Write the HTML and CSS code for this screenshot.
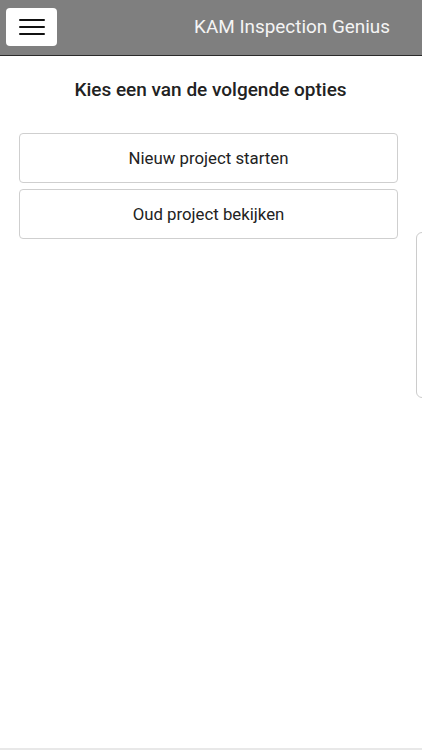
FILE: index.html
```html
<!DOCTYPE html>
<html lang="nl">
<head>
<meta charset="utf-8">
<title>KAM Inspection Genius</title>
<link rel="stylesheet" href="styles.css">
</head>
<body>
<div class="app">
  <header class="topbar">
    <button class="menu-btn" aria-label="Menu">
      <span class="bar"></span><span class="bar"></span><span class="bar"></span>
    </button>
    <div class="title">KAM Inspection Genius</div>
  </header>
  <main class="content">
    <h1 class="heading">Kies een van de volgende opties</h1>
    <div class="options">
      <button class="option">Nieuw project starten</button>
      <button class="option">Oud project bekijken</button>
    </div>
  </main>
  <div class="side-tab"></div>
</div>
</body>
</html>
```

FILE: styles.css
```css
* { box-sizing: border-box; }
html, body {
  margin: 0;
  padding: 0;
  background: #ffffff;
  font-family: Roboto, "Liberation Sans", Arial, sans-serif;
}
.app {
  position: relative;
  width: 422px;
  height: 750px;
  overflow: hidden;
  border-bottom: 2px solid #e8e8e8;
}
.topbar {
  height: 56px;
  background: #7f7f7f;
  border-bottom: 1.5px solid #2a2a2a;
  display: flex;
  align-items: center;
  justify-content: space-between;
  padding: 0 32px 0 6px;
}
.menu-btn {
  width: 51px;
  height: 38px;
  margin-top: -1px;
  background: #ffffff;
  border: none;
  border-radius: 4px;
  display: flex;
  flex-direction: column;
  align-items: center;
  justify-content: center;
  gap: 4.5px;
  padding: 0;
}
.bar {
  display: block;
  width: 26px;
  height: 2.4px;
  background: #111;
  border-radius: 1px;
}
.title {
  color: #f4f4f4;
  font-size: 18.9px;
  margin-top: -3px;
}
.content {
  padding: 0 24px 0 19px;
}
.heading {
  margin: 21px 0 0 0;
  text-align: center;
  font-size: 19px;
  font-weight: 500;
  color: #222;
  line-height: 26px;
  padding-left: 4px;
}
.options {
  margin-top: 30px;
  display: flex;
  flex-direction: column;
  gap: 6px;
}
.option {
  height: 50px;
  width: 100%;
  background: #fff;
  border: 1px solid #cfcfcf;
  border-radius: 4px;
  font-family: Roboto, "Liberation Sans", Arial, sans-serif;
  font-size: 16.8px;
  color: #222;
  padding: 0;
}
.side-tab {
  position: absolute;
  left: 416px;
  top: 232px;
  width: 30px;
  height: 166px;
  border: 1px solid #cccccc;
  border-radius: 6px;
  background: #fff;
}
```
